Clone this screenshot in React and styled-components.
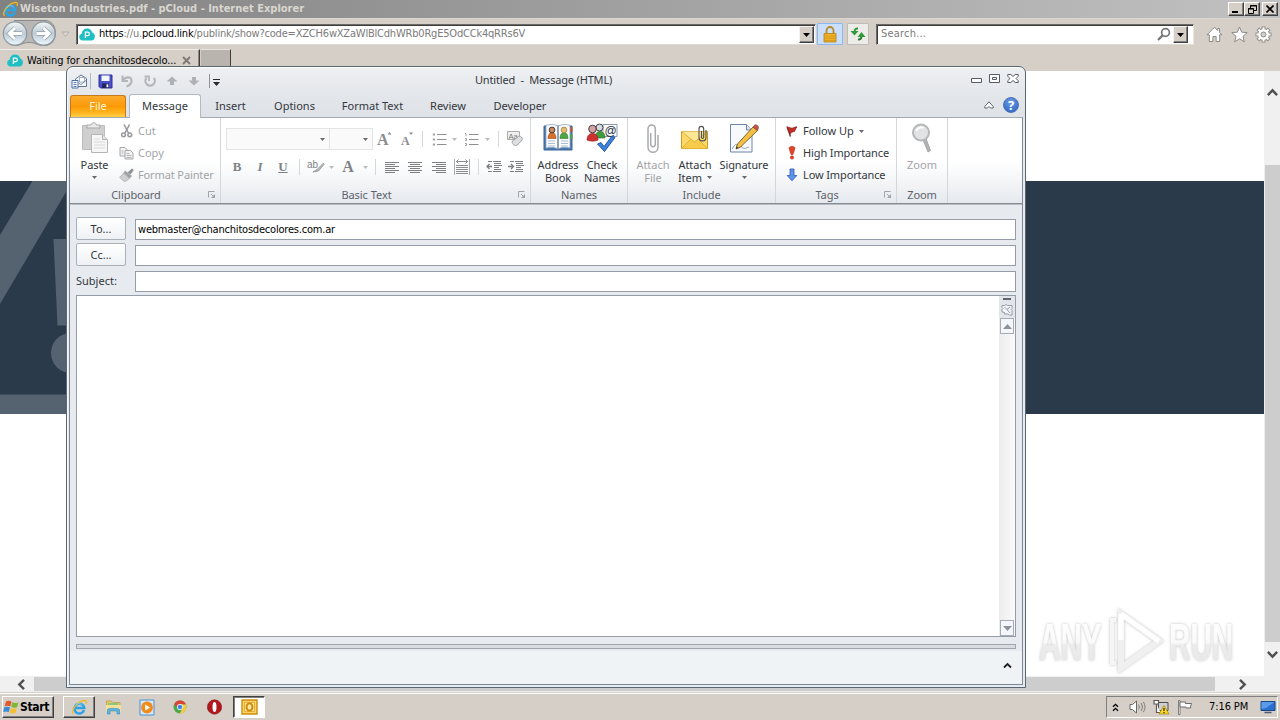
import React from 'react';
import styled, { createGlobalStyle, css } from 'styled-components';

const GlobalStyle = createGlobalStyle`
  * {
    box-sizing: border-box;
  }

  body {
    margin: 0;
    overflow: hidden;
    font-family: "DejaVu Sans Condensed", "DejaVu Sans", sans-serif;
    font-stretch: condensed;
    font-size: 11px;
    line-height: 14px;
    color: #000000;
  }

  svg {
    display: block;
    flex-shrink: 0;
  }
`;

const Screen = styled.div`
  position: relative;
  width: 1280px;
  height: 720px;
  display: flex;
  flex-direction: column;
  background: #d5cfc8;
  overflow: hidden;
  white-space: pre;
`;

const Text = styled.span`
  letter-spacing: ${props => props.$ls === undefined ? "inherit" : `${props.$ls}px`};
  color: ${props => props.$color || "inherit"};
`;

/* ---------- browser ---------- */

const TitleBar = styled.div`
  height: 18px;
  display: flex;
  align-items: center;
  padding: 0 2px 0 2px;
  background: linear-gradient(90deg, #818181, #c1c1c1);
  color: #d9d6d0;
  font-weight: bold;
`;

const TitleText = styled.span`
  flex: 1;
  padding-left: 2px;
  font-size: 11px;
`;

const CaptionButton = styled.span`
  width: 16px;
  height: 14px;
  margin-left: ${props => props.$gap || 0}px;
  display: flex;
  align-items: center;
  justify-content: center;
  background: #d5cfc8;
  border: 1px solid;
  border-color: #ffffff #404040 #404040 #ffffff;
  box-shadow: inset -1px -1px 0 #808080;
`;

const AddressRow = styled.div`
  height: 31px;
  display: flex;
  align-items: center;
  border-top: 1px solid #d8d8d0;
`;

const NavButtons = styled.div`
  width: 76px;
  display: flex;
  align-items: center;
`;

const AddressBox = styled.div`
  width: ${props => props.$w}px;
  height: 21px;
  margin-left: ${props => props.$gap || 0}px;
  display: flex;
  align-items: center;
  background: #ffffff;
  border: 1px solid;
  border-color: #6d6a66 #e9e5e0 #ddd8d2 #6d6a66;
  box-shadow: inset 1px 1px 0 #3e3e3e;
  padding: 0 1px 0 2px;
`;

const AddressText = styled.span`
  flex: 1;
  padding-left: ${props => props.$pad}px;
  letter-spacing: ${props => props.$ls}px;
  color: #7b7b7b;
`;

const DropButton = styled.span`
  width: 15px;
  height: 17px;
  margin: 1px ${props => props.$gap || 0}px 0 ${props => props.$before || 0}px;
  display: flex;
  align-items: center;
  justify-content: center;
  background: #d5cfc8;
  border: 1px solid;
  border-color: #f4f2ef #404040 #404040 #f4f2ef;
  box-shadow: inset -1px -1px 0 #808080;
`;

const SquareButton = styled.span`
  width: ${props => props.$w}px;
  height: 22px;
  margin-left: ${props => props.$gap}px;
  display: flex;
  align-items: center;
  justify-content: center;
  border: 1px solid ${props => props.$line};
  border-radius: 1px;
  background: ${props => props.$bg};
`;

const CommandIcons = styled.div`
  display: flex;
  gap: 7.5px;
  margin-left: 12px;
  padding-top: 1px;
`;

const TabRow = styled.div`
  height: 22px;
  display: flex;
  align-items: stretch;
`;

const BrowserTab = styled.div`
  width: 200px;
  display: flex;
  align-items: center;
  padding-left: 7px;
  border-top: 1px solid #f1eeea;
  border-right: 1px solid #3f3d3b;
  box-shadow: inset -1px 0 0 #8b8782;
`;

const TabLabel = styled.span`
  width: 155px;
  margin-left: 4px;
  letter-spacing: -0.1px;
`;

const NewTab = styled.div`
  width: 30px;
  margin: 0 0 0 1px;
  background: #bab4af;
  border-right: 1px solid #3f3d3b;
  border-top: 1px solid #e8e5e1;
`;

const Viewport = styled.div`
  flex: 1;
  display: flex;
  min-height: 0;
`;

const PageArea = styled.div`
  flex: 1;
  background: #ffffff;
  padding-top: 110px;
`;

const Banner = styled.div`
  height: 233px;
  background: #2a3a4b;
`;

const VScroll = styled.div`
  width: 16px;
  display: flex;
  flex-direction: column;
  align-items: center;
  justify-content: space-between;
  background: #f0f0f0;
  padding: 16px 0 16px;
`;

const VThumb = styled.div`
  align-self: stretch;
  margin: 67px 0 7px 1px;
  flex: 1;
  background: #cdcdcd;
`;

const HScroll = styled.div`
  height: 16px;
  display: flex;
  align-items: center;
  background: #f0f0f0;
  padding: 0 32px 0 16px;
`;

const HThumb = styled.div`
  flex: 1;
  height: 14px;
  margin: 0 22px 0 7px;
  background: #cdcdcd;
`;

/* ---------- taskbar ---------- */

const Taskbar = styled.div`
  height: 28px;
  display: flex;
  align-items: center;
  background: #d5cfc8;
  border-top: 1px solid #d5cfc8;
  box-shadow: inset 0 1px 0 #ffffff;
  padding: 1px 2px 0 2px;
`;

const StartButton = styled.div`
  width: 52px;
  height: 22px;
  display: flex;
  align-items: center;
  border: 1px solid;
  border-color: #ffffff #404040 #404040 #ffffff;
  box-shadow: inset -1px -1px 0 #808080;
  font-weight: bold;
  font-size: 12px;
`;

const TaskButton = styled.div`
  width: ${props => props.$w}px;
  height: 22px;
  display: flex;
  align-items: center;
  justify-content: center;
  border: 1px solid transparent;
  ${props => props.$raised && css`
    border-color: #ffffff #404040 #404040 #ffffff;
    box-shadow: inset -1px -1px 0 #808080;
  `}
  ${props => props.$pressed && css`
    margin-left: 2px;
    background: #ffffff;
    border-color: #404040 #ffffff #ffffff #404040;
    box-shadow: inset 1px 1px 0 #808080;
  `}
`;

const Tray = styled.div`
  width: 172px;
  height: 22px;
  margin-left: auto;
  display: flex;
  align-items: center;
  border: 1px solid;
  border-color: #808080 #ffffff #ffffff #808080;
  padding-left: 5px;
`;

const Clock = styled.span`
  width: 51px;
  margin-left: 6px;
  letter-spacing: -0.1px;
`;

/* ---------- message window ---------- */

const Window = styled.div`
  position: absolute;
  left: 66px;
  top: 66px;
  width: 960px;
  height: 622px;
  display: flex;
  flex-direction: column;
  border: 1px solid #596673;
  border-radius: 7px 7px 0 0;
  padding: 0 2px 2px;
  box-shadow: inset 0 1px 0 #ffffff, inset 1px 0 0 #f6f8fa;
  background: linear-gradient(180deg, #eef0f3 0, #e1e4e8 36px, #dfe3e8 50px, #e7ebf0 51px);
  color: #33373d;
  font-family: "Noto Sans", "DejaVu Sans", sans-serif;
  font-stretch: normal;
`;

const WindowTitle = styled.div`
  height: 28px;
  display: flex;
  align-items: center;
  padding: 0 4px 0 2px;
`;

const Caption = styled.span`
  padding-bottom: 2px;
  letter-spacing: -0.17px;
`;

const QuickBar = styled.div`
  width: 404px;
  display: flex;
  align-items: center;
`;

const QuickSlot = styled.span`
  width: ${props => props.$w}px;
  display: flex;
  justify-content: center;
`;

const WindowButtons = styled.div`
  margin-left: auto;
  padding-bottom: 4px;
  display: flex;
  align-items: center;
  gap: 7px;
`;

const Tabs = styled.div`
  height: 22px;
  display: flex;
`;

const Tab = styled.div`
  width: ${props => props.$w}px;
  display: flex;
  align-items: center;
  justify-content: center;
  ${props => props.$file && css`
    margin-left: 1px;
    margin-right: 3px;
    padding-bottom: 2px;
    color: #fff3d6;
    border: 1px solid #c77a1a;
    border-bottom: none;
    border-radius: 3px 3px 0 0;
    background: linear-gradient(180deg, #fdab2c 0%, #fb9a06 50%, #ffb520 80%, #ffd04a 100%);
  `}
  ${props => props.$active && css`
    height: 24px;
    margin-top: -1px;
    padding-bottom: 2px;
    position: relative;
    background: #ffffff;
    border: 1px solid #b4b9c1;
    border-bottom: none;
    border-radius: 3px 3px 0 0;
  `}
`;

const TabTools = styled.div`
  margin-left: auto;
  display: flex;
  align-items: center;
  gap: 9px;
  padding: 0 4px 2px 0;
`;

const HelpBadge = styled.span`
  width: 16px;
  height: 16px;
  border-radius: 50%;
  display: flex;
  align-items: center;
  justify-content: center;
  background: radial-gradient(circle at 50% 30%, #6d9fe8, #2a5dba);
  border: 1px solid #4c72b4;
  color: #ffffff;
  font-size: 13px;
  font-weight: bold;
`;

const Frame = styled.div`
  flex: 1;
  display: flex;
  flex-direction: column;
  border: 1px solid #7d8894;
  border-top-color: #a3a9b1;
  background: #e7ebf0;
`;

const Ribbon = styled.div`
  height: 86px;
  display: flex;
  background: linear-gradient(180deg, #ffffff 0%, #ffffff 50%, #f4f5f7 75%, #e5e9ee 100%);
  border-bottom: 1px solid #868c94;
  box-shadow: 0 1px 0 #b9bec5;
`;

const Group = styled.div`
  width: ${props => props.$w}px;
  display: flex;
  flex-direction: column;
  border-right: 1px solid #d3d6da;
  padding-top: 3px;
`;

const GroupBody = styled.div`
  height: 66px;
  display: flex;
  flex-direction: ${props => props.$column ? "column" : "row"};
  padding-left: ${props => props.$pad || 0}px;
`;

const GroupFooter = styled.div`
  height: 16px;
  display: flex;
  align-items: center;
  color: #5d6268;
`;

const GroupName = styled.span`
  flex: 1;
  text-align: center;
  letter-spacing: -0.05px;
`;

const Launcher = styled.span`
  width: 12px;
  margin-left: 6px;
`;

const BigButton = styled.div`
  width: ${props => props.$w}px;
  display: flex;
  flex-direction: column;
  align-items: center;
  line-height: 13px;
  text-align: center;
  color: ${props => props.$off ? "#a3a5a8" : "#33373d"};
  letter-spacing: ${props => props.$ls || 0}px;
`;

const BigIcon = styled.span`
  height: 34px;
  display: flex;
  align-items: center;
`;

const BigLabel = styled.span`
  margin-top: 3px;
`;

const LineTwo = styled.span`
  height: 13px;
  display: flex;
  align-items: center;
  justify-content: center;
  gap: 5px;
`;

const SmallStack = styled.div`
  display: flex;
  flex-direction: column;
  padding-left: ${props => props.$pad || 0}px;
`;

const SmallButton = styled.div`
  height: 22px;
  display: flex;
  align-items: center;
  color: ${props => props.$off ? "#a3a5a8" : "#33373d"};
  letter-spacing: ${props => props.$ls || 0}px;
  padding-bottom: 2px;
  gap: ${props => props.$gap || 4}px;
`;

const ToolRow = styled.div`
  height: 22px;
  display: flex;
  align-items: center;
  margin: ${props => props.$top}px 0 0 5px;
`;

const Combo = styled.span`
  width: ${props => props.$w}px;
  height: 22px;
  display: flex;
  align-items: center;
  justify-content: flex-end;
  padding-right: 4px;
  border: 1px solid #e3e4e6;
  background: #fafafa;
  ${props => props.$joined && css`
    border-left: none;
  `}
`;

const Cell = styled.span`
  width: ${props => props.$w}px;
  display: flex;
  align-items: center;
  justify-content: center;
`;

const Rule = styled.span`
  width: 1px;
  height: 16px;
  background: ${props => props.$dark ? "#b5b9be" : "#d5d7da"};
`;

const Letter = styled.span`
  font-family: "Liberation Serif", serif;
  font-weight: bold;
  font-size: ${props => props.$size || 13}px;
  font-style: ${props => props.$italic ? "italic" : "normal"};
  text-decoration: ${props => props.$under ? "underline" : "none"};
  color: #7f8285;
`;

const Fields = styled.div`
  padding: 13px 6px 0 6px;
  display: flex;
  flex-direction: column;
  gap: 3px;
`;

const Field = styled.div`
  height: 23px;
  display: flex;
  align-items: center;
`;

const FieldButton = styled.span`
  width: 50px;
  height: 23px;
  display: flex;
  align-items: center;
  justify-content: center;
  border: 1px solid #a9b0b9;
  border-radius: 2px;
  background: linear-gradient(180deg, #ffffff, #eef1f4);
`;

const FieldLabel = styled.span`
  width: 50px;
`;

const Input = styled.div`
  flex: 1;
  height: 21px;
  margin: 2px 0 0 9px;
  display: flex;
  align-items: center;
  padding-left: 2px;
  border: 1px solid #949da7;
  background: #ffffff;
  color: #000000;
  font-family: "DejaVu Sans Condensed", "DejaVu Sans", sans-serif;
  font-stretch: condensed;
  letter-spacing: -0.2px;
`;

const Editor = styled.div`
  height: 342px;
  margin: 3px 6px 0;
  display: flex;
  justify-content: flex-end;
  border: 1px solid #949da7;
  background: #ffffff;
`;

const EditorScroll = styled.div`
  width: 16px;
  display: flex;
  flex-direction: column;
  align-items: center;
  background: linear-gradient(90deg, #ececec, #fafafa);
`;

const ScrollTools = styled.div`
  width: 16px;
  height: 22px;
  display: flex;
  flex-direction: column;
  align-items: center;
  background: #e2e5e9;
  padding-top: 2px;
  gap: 4px;
`;

const ScrollArrow = styled.div`
  width: 14px;
  height: 16px;
  display: flex;
  align-items: center;
  justify-content: center;
  margin-top: ${props => props.$end ? "auto" : 0};
  border: 1px solid #a5abb8;
  background: #f4f6f9;
`;

const Splitter = styled.div`
  height: 5px;
  margin: 7px 6px 0;
  border: 1px solid #a0a6ae;
  background: #d8dbe0;
`;

const PeoplePane = styled.div`
  flex: 1;
  margin-top: 2px;
  display: flex;
  justify-content: flex-end;
  background: #eff3f6;
  padding: 11px 10px 0 0;
`;

const Watermark = styled.div`
  position: absolute;
  left: 1030px;
  top: 602px;
`;

/* ---------- icons ---------- */

const Caret = ({ color = "#66696d", size = 5 }) => (
    <svg width={size} height={size > 5 ? 4 : 3} viewBox="0 0 5 3" preserveAspectRatio="none"><path d="M0 0h5L2.5 3z" fill={color}/></svg>
);

const Chevron = ({ dir, color = "#505050" }) => {
    const turn = { up: 0, right: 90, down: 180, left: 270 }[dir];
    return (
        <svg width="11" height="11" viewBox="0 0 10 10">
            <path d="M.8 7.300L5 3l4.200 4.300" transform={`rotate(${turn} 5 5)`} fill="none" stroke={color} strokeWidth="2.2"/>
        </svg>
    );
};

const IeIcon = ({ size = 16 }) => (
    <svg width={size} height={size} viewBox="0 0 16 16">
        <path d="M13 11.200A4.900 4.900 0 1 1 13.200 8.900H4.500" fill="none" stroke="#2aa3e8" strokeWidth="2.500"/>
        <path d="M2.500 14.800C-1 12 7 1.700 14 1.400c1.800.1 1.600 2 .8 3.600" fill="none" stroke="#f2b91c" strokeWidth="1.300"/>
        <path d="M4.200 6.600C5.500 4.500 9.600 4 11.500 6" fill="none" stroke="#8fd6ff" strokeWidth=".8"/>
    </svg>
);

const CloudIcon = () => (
    <svg width="16" height="13" viewBox="0 0 16 13">
        <path d="M4 12.500C1.600 12.500.2 11 .2 9c0-1.700 1-3 2.500-3.300C3 2.500 5 .5 8 .5c2.600 0 4.600 1.500 5.200 4 1.700.5 2.700 2 2.700 3.900 0 2.300-1.500 4.100-3.700 4.100z" fill="#1fbfc4"/>
        <path d="M6.400 10V4.200h2.200a1.700 1.700 0 0 1 0 3.500H6.400" fill="none" stroke="#fff" strokeWidth="1.200"/>
    </svg>
);

const NavArrows = () => (
    <svg width="76" height="30" viewBox="0 0 76 30">
        <defs>
            <linearGradient id="glass" x1="0" y1="0" x2="0" y2="1">
                <stop offset="0" stopColor="#f4f7f9"/>
                <stop offset=".5" stopColor="#bccad4"/>
                <stop offset="1" stopColor="#eefaff"/>
            </linearGradient>
        </defs>
        <path d="M14 1.500h31c14 0 14 25 0 25-9 0-9-3-16-3s-7 3-15 3" fill="#b9b7b4" stroke="#8c8c8c"/>
        <circle cx="15" cy="14.500" r="11.700" fill="url(#glass)" stroke="#8e989e" strokeWidth="1.200"/>
        <circle cx="43.500" cy="14.500" r="11.700" fill="url(#glass)" stroke="#8e989e" strokeWidth="1.200"/>
        <path d="M22 14.500H9m6-5.500L9.300 14.500l5.700 5.500" fill="none" stroke="#93a0a8" strokeWidth="4.400"/>
        <path d="M22 14.500H9m6-5.500L9.300 14.500l5.700 5.500" fill="none" stroke="#fff" strokeWidth="3"/>
        <path d="M36.500 14.500h13m-6-5.500l5.700 5.500-5.700 5.500" fill="none" stroke="#93a0a8" strokeWidth="4.400"/>
        <path d="M36.500 14.500h13m-6-5.500l5.700 5.500-5.700 5.500" fill="none" stroke="#fff" strokeWidth="3"/>
        <path d="M62 13h7l-3.500 4.500z" fill="#ddd8d2" stroke="#aaa49e" strokeWidth=".8"/>
    </svg>
);

const LockIcon = () => (
    <svg width="14" height="17" viewBox="0 0 14 17">
        <path d="M3.500 8V4.500a3.500 3.500 0 0 1 7 0V8" fill="none" stroke="#b8892b" strokeWidth="1.800"/>
        <path d="M1 7.500h12V16H1z" fill="#f0b428" stroke="#b87f10" strokeWidth=".8"/>
        <path d="M1.500 10h11M1.500 12.200h11M1.500 14.400h11" stroke="#c98d17" strokeWidth=".7"/>
    </svg>
);

const RefreshIcon = () => (
    <svg width="16" height="14" viewBox="0 0 16 14">
        <path d="M8 1.500C5.500 1.200 4.500 2.800 4.500 5" fill="none" stroke="#2f9a3a" strokeWidth="2"/>
        <path d="M.5 4h8L4.500 8.500z" fill="#2f9a3a"/>
        <path d="M8 12.500c2.500.3 3.500-1.200 3.500-3.500" fill="none" stroke="#2f7a38" strokeWidth="2"/>
        <path d="M7.500 10h8L11.500 5z" fill="#2f9a3a"/>
    </svg>
);

const SearchIcon = () => (
    <svg width="14" height="14" viewBox="0 0 14 14">
        <circle cx="8.500" cy="5.500" r="3.900" fill="none" stroke="#777" strokeWidth="1.700"/>
        <path d="M5.600 8.400L1 13" stroke="#777" strokeWidth="2.200"/>
    </svg>
);

const HomeIcon = () => (
    <svg width="17" height="17" viewBox="0 0 17 17">
        <path d="M8.500 1.200L1 8.800h2.300V15.500h3.600V10.500h3.200v5h3.600V8.800H16l-2.500-2.500V2.500h-1.800v2z" fill="#fff" stroke="#8d8a87"/>
    </svg>
);

const StarIcon = () => (
    <svg width="17" height="17" viewBox="0 0 17 17">
        <path d="M8.500 1l2.200 5.200 5.500.4-4.200 3.700 1.300 5.500-4.800-3-4.800 3L5 10.300.8 6.600l5.500-.4z" fill="#fff" stroke="#8d8a87"/>
    </svg>
);

const GearIcon = () => (
    <svg width="17" height="17" viewBox="0 0 17 17">
        {[0, 45, 90, 135].map(a => (
            <path key={a} d="M8.500.5v16" transform={`rotate(${a} 8.500 8.500)`} stroke="#8d8a87" strokeWidth="3.800"/>
        ))}
        <circle cx="8.500" cy="8.500" r="6.300" fill="#8d8a87"/>
        {[0, 45, 90, 135].map(a => (
            <path key={a} d="M8.500 1.400v14.200" transform={`rotate(${a} 8.500 8.500)`} stroke="#fff" strokeWidth="2"/>
        ))}
        <circle cx="8.500" cy="8.500" r="5.400" fill="#fff"/>
        <circle cx="8.500" cy="8.500" r="2.500" fill="#d5cfc8" stroke="#8d8a87"/>
    </svg>
);

const BannerArt = () => (
    <svg width="66" height="233" viewBox="0 0 66 233" fill="#556371">
        <path d="M32.500 0H66v11L0 123V54z"/>
        <path d="M53.500 58H66v86.500H57.500z"/>
        <circle cx="71" cy="172" r="20"/>
        <path d="M0 213.500h66V233H0z"/>
    </svg>
);

const MailIcon = () => (
    <svg width="17" height="15" viewBox="0 0 17 15">
        <path d="M4.500 5L10 1l5.500 3.500v8h-11z" fill="#f4f7fb" stroke="#5e7693"/>
        <path d="M8.500 3.500h5V8h-5z" fill="#fff" stroke="#7d8fa6" strokeWidth=".7"/>
        <path d="M7.500 9l2.500 1.500L15.500 6" fill="none" stroke="#5e7693" strokeWidth=".8"/>
        <path d="M1 6.500h6v7.500H1z" fill="#fff" stroke="#4c6ea5"/>
        <path d="M2.500 8.500h3m-3 2h3m-3 2h3" stroke="#4c6ea5" strokeWidth=".9"/>
    </svg>
);

const SaveIcon = () => (
    <svg width="15" height="15" viewBox="0 0 15 15">
        <path d="M1 1h13v13H2.500L1 12.500z" fill="#4950c9" stroke="#2e3294"/>
        <path d="M3.500 1.500h8v5.500h-8z" fill="#f4f6fd"/>
        <path d="M4 9.500h7v4.500H4z" fill="#20255f"/>
        <path d="M8.500 10.300h1.800v3H8.500z" fill="#fff"/>
    </svg>
);

const UndoIcon = () => (
    <svg width="14" height="14" viewBox="0 0 14 14">
        <path d="M2.500 1.500v5.500H8" fill="none" stroke="#b3b6ba" strokeWidth="2"/>
        <path d="M3 6.500C5 2.500 11.500 2 11.500 6.500c0 2.800-2 5-5 6" fill="none" stroke="#b3b6ba" strokeWidth="2.200"/>
    </svg>
);

const RedoIcon = () => (
    <svg width="14" height="14" viewBox="0 0 14 14">
        <path d="M3.500 4a4.700 4.700 0 1 0 7.300 0" fill="none" stroke="#b3b6ba" strokeWidth="2.200"/>
        <path d="M1.500 2.500H6V7" fill="none" stroke="#b3b6ba" strokeWidth="1.800"/>
    </svg>
);

const BlockArrow = ({ down }) => (
    <svg width="12" height="10" viewBox="0 0 12 10">
        <path d="M6 .5l5.500 5H8V9H4V5.500H.5z" fill="#aeb1b5" transform={down ? "rotate(180 6 5)" : undefined}/>
    </svg>
);

const CustomizeIcon = () => (
    <svg width="12" height="14" viewBox="0 0 12 14">
        <path d="M1.500 0v14" stroke="#8d9299" strokeWidth="1"/>
        <path d="M5 5.500h7" stroke="#26282b"/>
        <path d="M5 8h7L8.500 12z" fill="#26282b"/>
    </svg>
);

const MinIcon = () => (
    <svg width="11" height="12" viewBox="0 0 11 12"><path d="M.5 5.500h10v4H.500z" fill="#fff" stroke="#565c66"/></svg>
);

const MaxIcon = () => (
    <svg width="11" height="12" viewBox="0 0 11 12">
        <path d="M.5 1.500h10v8H.500z" fill="#fff" stroke="#565c66"/>
        <path d="M3.500 4.500h4v2h-4z" fill="#fff" stroke="#565c66"/>
    </svg>
);

const CloseIcon = () => (
    <svg width="12" height="12" viewBox="0 0 12 12">
        <path d="M.8 1.500h3l2.200 2 2.200-2h3v1.800L9 5.500l2.200 2.200v1.800h-3L6 7.500l-2.200 2h-3V7.700L3 5.500.8 3.300z" fill="#fff" stroke="#565c66"/>
    </svg>
);

const CollapseIcon = () => (
    <svg width="10" height="8" viewBox="0 0 10 8">
        <path d="M.8 5.500L5 .8l4.200 4.700v1.500H6.500L5 5.500 3.500 7H.8z" fill="#fff" stroke="#5f6570"/>
    </svg>
);

const PasteIcon = () => (
    <svg width="28" height="32" viewBox="0 0 28 32">
        <path d="M1.500 3.500h22v24h-22z" fill="#cfcfcf" stroke="#bdbdbd"/>
        <path d="M6 6V3h4c.5-3 5-3 5.500 0H19v3z" fill="#e9e9e9" stroke="#a7a7a7"/>
        <path d="M10.500 12.500h11l5 5v13h-16z" fill="#f6f6f6" stroke="#b5b5b5"/>
        <path d="M21.500 12.500v5h5" fill="#e2e2e2" stroke="#b5b5b5"/>
        <path d="M13 17h6m-6 3h11m-11 3h11m-11 3h11" stroke="#dadada"/>
    </svg>
);

const CutIcon = () => (
    <svg width="15" height="14" viewBox="0 0 15 14" fill="none" stroke="#97999c">
        <path d="M5 .5l4.500 8.500M10.500.5L6 9" strokeWidth="1.600"/>
        <circle cx="4.500" cy="10.800" r="1.900" strokeWidth="1.500"/>
        <circle cx="10.800" cy="10.800" r="1.900" strokeWidth="1.500"/>
    </svg>
);

const CopyIcon = () => (
    <svg width="15" height="14" viewBox="0 0 15 14" stroke="#a5a7aa">
        <path d="M1 1.500h5l2 2V10H1z" fill="#f2f2f2"/>
        <path d="M6 4.500h5.500l2.500 2.500v6H6z" fill="#f2f2f2"/>
        <path d="M2.500 5h2m-2 2h2m3 .5h3m-3 2h5m-5 2h5" strokeWidth=".8"/>
    </svg>
);

const PainterIcon = () => (
    <svg width="15" height="14" viewBox="0 0 15 14">
        <path d="M13 .5l1.800 1.500L11.500 6.500 8.500 4.500z" fill="#8f9194"/>
        <path d="M6 2.500l7 5.500-2.500 2.500L4.500 5z" fill="#a0a2a5"/>
        <path d="M4.500 5l6 5.500c-1.500 1.500-3.500 2.800-5.500 3L.5 9C2 8.200 3.500 6.800 4.500 5z" fill="#cfd0d1" stroke="#a5a7a9" strokeWidth=".7"/>
    </svg>
);

const LauncherIcon = () => (
    <svg width="8" height="8" viewBox="0 0 8 8" fill="none" stroke="#a0a4a9">
        <path d="M.5 6.500v-6h6"/>
        <path d="M3 3l3 3"/>
        <path d="M7 3v4H3z" fill="#a0a4a9" stroke="none"/>
    </svg>
);

const ListIcon = ({ numbered }) => (
    <svg width="15" height="13" viewBox="0 0 15 13">
        <path d="M5 1.500h9.500m-9.500 5h9.500m-9.500 5h9.500" stroke="#8d8f92"/>
        {numbered
            ? <path d="M1 .5h1v2.500M1 5.500h1.500v2H1M1 10.500h1.500v2H1" stroke="#9c9ea1" fill="none"/>
            : <path d="M.8.5h2.200v2H.8zm0 5h2.200v2H.8zm0 5h2.200v2H.8z" fill="#a2a4a7"/>}
    </svg>
);

const AlignIcon = ({ mode }) => {
    const lines = [14, 10, 14, 10, 14, 10];
    return (
        <svg width="15" height="13" viewBox="0 0 15 13">
            {lines.map((w, i) => {
                const x = mode === "left" ? 0 : mode === "right" ? 14 - w : (14 - w) / 2;
                return <path key={i} d={`M${x} ${i * 2 + 1.5}h${w}`} stroke="#7d7f82"/>;
            })}
        </svg>
    );
};

const JustifyIcon = () => (
    <svg width="16" height="16" viewBox="0 0 16 16" stroke="#8a8c8f" fill="none">
        <path d="M.5 0v16M15.500 0v16" stroke="#a9abae"/>
        <path d="M2 2.500h12M4.500.5l-2 2 2 2m7-4l2 2-2 2"/>
        <path d="M2 6.500h12m-12 2h12m-12 2h12m-12 2h12m-12 2h12"/>
    </svg>
);

const IndentIcon = ({ more }) => (
    <svg width="16" height="14" viewBox="0 0 16 14" stroke="#7d7f82" fill="none">
        <path d="M2 1.500h4m1 0h8M8 3.500h7M8 5.500h8M8 7.500h5M8 9.500h7M2 11.500h4m1 0h8"/>
        <path d={more ? "M0 6.500h5M3 4l2.500 2.500L3 9" : "M1 6.500h5M3.500 4L1 6.500 3.500 9"} strokeWidth="1.300"/>
    </svg>
);

const FormatClearIcon = () => (
    <svg width="18" height="18" viewBox="0 0 18 18">
        <path d="M1.500 1.500h12v8h-12z" fill="#efefef" stroke="#a9abad"/>
        <text x="2.500" y="8.500" fontSize="7.500" fontFamily="Liberation Sans" fill="#77797c">Aa</text>
        <path d="M6 11.500l6.500-5c2-1 4.500 1 3.500 3.500L11.500 15c-2.500 1.500-5.500-.5-5.500-3.500z" fill="#dedede" stroke="#a0a2a5"/>
    </svg>
);

const HighlightIcon = () => (
    <svg width="18" height="15" viewBox="0 0 18 15">
        <text x="0" y="8" fontSize="10" fontFamily="Liberation Sans" fill="#808285">ab</text>
        <path d="M16.500 3L10 9.500l-4 2.500 5.500-1L17 4.500z" fill="#b5b7b9" stroke="#929497" strokeWidth=".8"/>
    </svg>
);

const ResizeLetter = ({ grow }) => (
    <svg width="16" height="16" viewBox="0 0 16 16">
        <text x={grow ? 0 : 2} y="14" fontSize={grow ? 16 : 12} fontWeight="bold" fontFamily="Liberation Serif" fill="#8b8d90">A</text>
        <path d={grow ? "M10.500 3.500h4L12.500 1z" : "M10 1.500h4L12 4z"} fill="#8b8d90"/>
    </svg>
);

const AddressBookIcon = () => (
    <svg width="31" height="30" viewBox="0 0 31 30">
        <path d="M1 3h28v24H1z" fill="#4a79ad" stroke="#3a6698"/>
        <path d="M3 2.500c4-1.500 9-1.500 12 1 3-2.500 8-2.500 12-1V25c-4-1-9-1-12 1-3-2-8-2-12-1z" fill="#fdfdfe" stroke="#8aa3bf" strokeWidth=".8"/>
        <path d="M15 3.500V26" stroke="#6985a6" strokeWidth="1.500"/>
        <path d="M5 18h7m-7 2.500h7M5 23h7m6-5h7m-7 2.500h7M18 23h7" stroke="#a9bdd3"/>
        <path d="M5 15.500c0-8 8-8 8 0z" fill="#d8702c" stroke="#97451a" strokeWidth=".6"/>
        <circle cx="9" cy="7" r="2.900" fill="#c98b5d" stroke="#3a332e" strokeWidth=".9"/>
        <path d="M17 15.500c0-8 8-8 8 0z" fill="#4ba544" stroke="#2f7a2b" strokeWidth=".6"/>
        <circle cx="21" cy="7" r="2.900" fill="#e3bb78" stroke="#a5813d" strokeWidth=".8"/>
        <path d="M28.500 4v5" stroke="#d2502b" strokeWidth="2"/>
        <path d="M28.500 11v5" stroke="#4ba544" strokeWidth="2"/>
    </svg>
);

const CheckNamesIcon = () => (
    <svg width="32" height="30" viewBox="0 0 32 30">
        <path d="M17 1.500h14v12H17z" fill="#fafbfd" stroke="#8e9aad"/>
        <path d="M9 15c0-9 10-9 10 0z" fill="#3f9b3b" stroke="#276f25" strokeWidth=".6"/>
        <circle cx="13.500" cy="4.500" r="3.500" fill="#d9dde0" stroke="#3f4347"/>
        <path d="M1 17c0-9 11-9 11 0-2 1.500-9 1.500-11 0z" fill="#cf3030" stroke="#951d1d" strokeWidth=".6"/>
        <circle cx="6.500" cy="6" r="3.800" fill="#d3a2a2" stroke="#4d3a3c"/>
        <text x="18.500" y="12" fontSize="12" fontFamily="Liberation Sans" fill="#2c3242">@</text>
        <path d="M11.500 21l3.500-1.500 3 4L26 13l3 1.500L18.500 28.500z" fill="#3d83dc" stroke="#1d4f9e" strokeWidth=".9"/>
    </svg>
);

const ClipIcon = () => (
    <svg width="12" height="31" viewBox="0 0 12 31" fill="none" stroke="#a9abae" strokeWidth="1.500">
        <path d="M3.700 10v11c0 3.500 4.600 3.500 4.600 0V6c0-5.500-7.300-5.500-7.300 0v18c0 7 10 7 10 0V12"/>
    </svg>
);

const EnvelopeClipIcon = () => (
    <svg width="30" height="30" viewBox="0 0 30 30">
        <path d="M1.500 8.500h26v17h-26z" fill="#fbd968" stroke="#cf9a26"/>
        <path d="M1.500 25.500l9-9h8l9 9" fill="#f8cc4b" stroke="#d9a735" strokeWidth=".8"/>
        <path d="M1.500 8.500l13 10.500 13-10.500" fill="#fde694" stroke="#d9a735" strokeWidth=".9"/>
        <path d="M21.500 8v6c0 2 2.200 2 2.200 0V6c0-3.500-4.700-3.500-4.700 0v8.500c0 4.500 7 4.500 7 0V7" fill="none" stroke="#4b4f56" strokeWidth="1.100"/>
    </svg>
);

const SignatureIcon = () => (
    <svg width="30" height="31" viewBox="0 0 30 31">
        <path d="M1.500 1.500h16l5.500 5.500v22H1.500z" fill="#f7f9fd" stroke="#6b84a8"/>
        <path d="M17.500 1.500V7H23" fill="#dbe4f0" stroke="#6b84a8"/>
        <path d="M3 26c3-5 5-6 5-3s1 3 4 0c2 4 5 2 8 1" fill="none" stroke="#8793a5" strokeWidth=".9"/>
        <path d="M24 4l4.500 3.500-17 16.500-4.500 2 1.500-5z" fill="#f4bf45" stroke="#755a22" strokeWidth=".9"/>
        <path d="M24 4l1.700-2c1.500-1 4.500 1.500 3.800 3l-1 2.500z" fill="#c9534b" stroke="#7b4430" strokeWidth=".6"/>
        <path d="M7 26l2-1.300-1.300-1.200z" fill="#22252b"/>
    </svg>
);

const FlagIcon = () => (
    <svg width="12" height="13" viewBox="0 0 12 13">
        <path d="M1 1.500l3.500 10" stroke="#7d3530" strokeWidth="1.500"/>
        <path d="M1.500 2.500c2-1 3 1 5 .5s3-1.500 4.500-1c-1.500 1.500-1.500 3-2.500 4.500-2 .5-3 .8-4.500 2.500z" fill="#c22f27" stroke="#8c1d18" strokeWidth=".6"/>
    </svg>
);

const AlertIcon = () => (
    <svg width="12" height="14" viewBox="0 0 12 14">
        <path d="M3 2c.5-2 5.500-2 6 0L7 8.500H5z" fill="#e5432a" stroke="#b42c17" strokeWidth=".6"/>
        <circle cx="6" cy="11.500" r="1.700" fill="#e5432a" stroke="#b42c17" strokeWidth=".5"/>
    </svg>
);

const DownIcon = () => (
    <svg width="12" height="14" viewBox="0 0 12 14">
        <path d="M4 1h4v6.500h2.800L6 12.800 1.200 7.500H4z" fill="#5f92ea" stroke="#2d57a8" strokeWidth=".8"/>
    </svg>
);

const ZoomIcon = () => (
    <svg width="22" height="31" viewBox="0 0 22 31">
        <path d="M12 17l3-1.500 4.500 12L17 29z" fill="#b1b3b5" stroke="#939598" strokeWidth=".7"/>
        <circle cx="10" cy="9.500" r="8" fill="#e2e3e4" stroke="#b4b6b8" strokeWidth="2"/>
        <path d="M5.500 8c.5-3 4-4.500 7-3" fill="none" stroke="#fff" strokeWidth="1.800"/>
    </svg>
);

const SelectObjectIcon = () => (
    <svg width="12" height="12" viewBox="0 0 12 12" fill="#f1f3f5" stroke="#8c929c" strokeWidth=".9">
        <path d="M1 1.500h2.500l1.500-1 1.500 1H11v3l-1 1 1 1V11H8.500L7 10H3.500V8.500L1 8V5.500l1-1-1-1z"/>
        <path d="M3.500 3L6 5.500 9 3M6 5.500L9 9" fill="none"/>
    </svg>
);

const WindowsFlag = () => (
    <svg width="17" height="16" viewBox="0 0 17 16">
        <path d="M3 2.500c2-1 4-.8 5.500.3L7.300 7.500C5.800 6.500 3.700 6.400 1.700 7.200z" fill="#e4572b"/>
        <path d="M9.300 3.200c2 1 4 1 6.200.2l-1.300 4.700c-2 .8-4 .7-6-.3z" fill="#7db83a"/>
        <path d="M1.400 8.200c2-.8 4-.7 5.600.3l-1.300 4.700C4.200 12.200 2 12.100.1 13z" fill="#3a8ad8"/>
        <path d="M7.900 8.900c2 1 4 1 6 .2l-1.300 4.700c-2 .9-4 .7-6-.3z" fill="#f6c02c"/>
    </svg>
);

const FolderIcon = () => (
    <svg width="17" height="16" viewBox="0 0 17 16">
        <path d="M1.500 2h5l1.500 1.500h7v8h-13.500z" fill="#e8c765" stroke="#b99a45" strokeWidth=".7"/>
        <path d="M3 4h10v4H3z" fill="#8ec77c"/>
        <path d="M1 6h15v7H1z" fill="#f5e09a"/>
        <path d="M2.500 15v-4.500c0-1.500 12-1.500 12 0V15H12v-3H5v3z" fill="#5fb4e6" stroke="#3b8cc4" strokeWidth=".7"/>
    </svg>
);

const PlayerIcon = () => (
    <svg width="16" height="17" viewBox="0 0 16 17">
        <path d="M1 1h14v15H1z" fill="#d6e8f8" stroke="#4b92cf"/>
        <circle cx="8" cy="8.500" r="5.900" fill="#f38b1c"/>
        <path d="M6.200 5.500v6l4.800-3z" fill="#fff"/>
    </svg>
);

const ChromeIcon = () => (
    <svg width="14" height="14" viewBox="0 0 14 14">
        <circle cx="7" cy="7" r="6.500" fill="#4ca64c"/>
        <path d="M1.300 4A6.500 6.500 0 0 1 13 4.500H7L4.500 8z" fill="#dc4437"/>
        <path d="M13 4.500A6.500 6.500 0 0 1 6.500 13.500L10 8 7 4.500z" fill="#f7cb3f"/>
        <circle cx="7" cy="7" r="3" fill="#fff"/>
        <circle cx="7" cy="7" r="2.300" fill="#4285e8"/>
    </svg>
);

const OperaIcon = () => (
    <svg width="15" height="16" viewBox="0 0 15 16">
        <circle cx="7.500" cy="8" r="7.200" fill="#b3161b" stroke="#7c0d10" strokeWidth=".5"/>
        <ellipse cx="7.500" cy="8" rx="2" ry="5" fill="#fff"/>
    </svg>
);

const OutlookIcon = () => (
    <svg width="17" height="16" viewBox="0 0 17 16">
        <path d="M1 1h15v14H1z" fill="#fbd35c" stroke="#d08d12" strokeWidth="1.400"/>
        <path d="M3.500 3.500h10v9h-10z" fill="#fde9a4" stroke="#e0a52c" strokeWidth=".8"/>
        <ellipse cx="8.500" cy="8" rx="3" ry="3.600" fill="none" stroke="#d18806" strokeWidth="1.900"/>
    </svg>
);

const TrayUpIcon = () => (
    <svg width="7" height="9" viewBox="0 0 7 9" fill="none" stroke="#000" strokeWidth="1.300">
        <path d="M1 3.800l2.500-2.500L6 3.800M1 7.800l2.500-2.500L6 7.800"/>
    </svg>
);

const SpeakerIcon = () => (
    <svg width="17" height="14" viewBox="0 0 17 14">
        <path d="M1 4.500h2.500l4-3.500v12l-4-3.500H1z" fill="#fff" stroke="#676767"/>
        <path d="M9.500 4.500c1 1.500 1 3.500 0 5M12 3c1.800 2.500 1.800 5.500 0 8M14.300 1.800c2.200 3.500 2.200 7 0 10.400" fill="none" stroke="#7a7a7a"/>
    </svg>
);

const NetworkIcon = () => (
    <svg width="17" height="16" viewBox="0 0 17 16">
        <path d="M5.500 3.500h9.500v8H5.500z" fill="#cfcfcf" stroke="#4c4c4c"/>
        <path d="M1 1.500h4.500V5H1zM3.500 5v8.500h4" fill="#fff" stroke="#5a5a5a" strokeWidth="1.200"/>
        <path d="M11 6.500l5 8.500H6z" fill="#ffd91f" stroke="#9f8209" strokeWidth=".7"/>
        <path d="M11 9v3m0 1v1.200" stroke="#222" strokeWidth="1.200"/>
    </svg>
);

const TrayFlagIcon = () => (
    <svg width="16" height="15" viewBox="0 0 16 15">
        <path d="M1.500.5h1.500V14.500H1.500z" fill="#fff" stroke="#666" strokeWidth=".8"/>
        <path d="M3 2h5.500v1.500h6c-.8 1.500-.8 3-1 4.500H9V7H3z" fill="#fff" stroke="#6b6b6b"/>
    </svg>
);

const DesktopIcon = () => (
    <svg width="16" height="14" viewBox="0 0 16 14">
        <path d="M1 1.500h14v9H1z" fill="#2a6fd0" stroke="#184686"/>
        <path d="M1.500 2h13L6 8 1.500 9z" fill="#5a9ae8"/>
        <path d="M4.500 12.500h7" stroke="#4a5b75" strokeWidth="1.500"/>
    </svg>
);

const AnyRunMark = () => (
    <svg width="230" height="80" viewBox="0 0 230 80">
        <defs>
            <filter id="soft" x="-10%" y="-10%" width="120%" height="120%">
                <feDropShadow dx="0" dy="0" stdDeviation="1.800" floodColor="#8a8a8a" floodOpacity=".55"/>
            </filter>
            <linearGradient id="fade" x1="0" y1="0" x2="0" y2="1">
                <stop offset="0" stopColor="#ffffff"/>
                <stop offset=".5" stopColor="#fafafa"/>
                <stop offset=".55" stopColor="#ececec"/>
                <stop offset="1" stopColor="#e6e6e6"/>
            </linearGradient>
        </defs>
        <g filter="url(#soft)" fill="url(#fade)" fontFamily="Liberation Sans" fontWeight="bold" fontSize="52">
            <text transform="translate(9 58) scale(.57 1)">ANY</text>
            <text transform="translate(139 58) scale(.57 1)">RUN</text>
            <path d="M91 66V12l38 27-38 27z" fill="none" stroke="#f0f0f0" strokeWidth="6"/>
            <path d="M91 12v26M91 12l38 27" fill="none" stroke="#ffffff" strokeWidth="5"/>
            <path d="M86 18h-4v43h4" fill="none" stroke="#f6f6f6" strokeWidth="4"/>
        </g>
    </svg>
);

/* ---------- sections ---------- */

const Browser = () => (
    <>
        <TitleBar>
            <IeIcon/>
            <TitleText>Wiseton Industries.pdf - pCloud - Internet Explorer</TitleText>
            <CaptionButton><svg width="8" height="8"><path d="M0 6h6v2H0z"/></svg></CaptionButton>
            <CaptionButton>
                <svg width="9" height="9" fill="none" stroke="#000"><path d="M2.500 3V.500h6v5H6M2 1h7M.500 3.500h5v5h-5zM0 4h6"/></svg>
            </CaptionButton>
            <CaptionButton $gap={2}><svg width="8" height="8" stroke="#000" strokeWidth="1.600"><path d="M.5.5l7 7M7.500.5l-7 7"/></svg></CaptionButton>
        </TitleBar>
        <AddressRow>
            <NavButtons><NavArrows/></NavButtons>
            <AddressBox $w={740}>
                <CloudIcon/>
                <AddressText $pad={4} $ls={-0.2}>
                    <Text $color="#000">https</Text>://u.<Text $color="#000">pcloud.link</Text>/publink/show?code=XZCH6wXZaWlBlCdhWRb0RgE5OdCCk4qRRs6V
                </AddressText>
                <DropButton><Caret color="#000" size={7}/></DropButton>
            </AddressBox>
            <SquareButton $w={26} $gap={1} $line="#8bb8ee" $bg="#c9dffb"><LockIcon/></SquareButton>
            <SquareButton $w={22} $gap={4} $line="#bdbbb8" $bg="#eeece9"><RefreshIcon/></SquareButton>
            <AddressBox $w={318} $gap={7}>
                <AddressText $pad={2} $ls={0.2}>Search...</AddressText>
                <SearchIcon/>
                <DropButton $before={2} $gap={4}><Caret color="#000" size={7}/></DropButton>
            </AddressBox>
            <CommandIcons><HomeIcon/><StarIcon/><GearIcon/></CommandIcons>
        </AddressRow>
        <TabRow>
            <BrowserTab>
                <CloudIcon/>
                <TabLabel>Waiting for chanchitosdecolo...</TabLabel>
                <svg width="9" height="9" stroke="#7c7874" strokeWidth="1.800"><path d="M1 1l7 7M8 1L1 8"/></svg>
            </BrowserTab>
            <NewTab/>
        </TabRow>
        <Viewport>
            <PageArea>
                <Banner><BannerArt/></Banner>
            </PageArea>
            <VScroll>
                <Chevron dir="up"/>
                <VThumb/>
                <Chevron dir="down"/>
            </VScroll>
        </Viewport>
        <HScroll>
            <Chevron dir="left"/>
            <HThumb/>
            <Chevron dir="right"/>
        </HScroll>
    </>
);

const ClipboardGroup = () => (
    <Group $w={151}>
        <GroupBody $pad={4}>
            <BigButton $w={41} $ls={-0.1}>
                <BigIcon><PasteIcon/></BigIcon>
                <BigLabel>Paste</BigLabel>
                <LineTwo><Caret/></LineTwo>
            </BigButton>
            <SmallStack $pad={4}>
                <SmallButton $off><CutIcon/>Cut</SmallButton>
                <SmallButton $off><CopyIcon/>Copy</SmallButton>
                <SmallButton $off $ls={-0.12}><PainterIcon/>Format Painter</SmallButton>
            </SmallStack>
        </GroupBody>
        <GroupFooter>
            <GroupName>Clipboard</GroupName>
            <Launcher><LauncherIcon/></Launcher>
        </GroupFooter>
    </Group>
);

const BasicTextGroup = () => (
    <Group $w={310}>
        <GroupBody $column>
            <ToolRow $top={7}>
                <Combo $w={104}><Caret/></Combo>
                <Combo $w={43} $joined><Caret/></Combo>
                <Cell $w={24}><ResizeLetter grow/></Cell>
                <Cell $w={20}><ResizeLetter/></Cell>
                <Cell $w={10}><Rule/></Cell>
                <Cell $w={24}><ListIcon/></Cell>
                <Cell $w={6}><Caret color="#b9bbbd"/></Cell>
                <Cell $w={28}><ListIcon numbered/></Cell>
                <Cell $w={5}><Caret color="#b9bbbd"/></Cell>
                <Cell $w={16}><Rule/></Cell>
                <Cell $w={18}><FormatClearIcon/></Cell>
            </ToolRow>
            <ToolRow $top={6}>
                <Cell $w={22}><Letter>B</Letter></Cell>
                <Cell $w={24}><Letter $italic>I</Letter></Cell>
                <Cell $w={22}><Letter $under>U</Letter></Cell>
                <Cell $w={10}><Rule/></Cell>
                <Cell $w={24}><HighlightIcon/></Cell>
                <Cell $w={6}><Caret color="#b9bbbd"/></Cell>
                <Cell $w={28}><Letter $size={16}>A</Letter></Cell>
                <Cell $w={6}><Caret color="#b9bbbd"/></Cell>
                <Cell $w={14}><Rule/></Cell>
                <Cell $w={20}><AlignIcon mode="left"/></Cell>
                <Cell $w={26}><AlignIcon mode="center"/></Cell>
                <Cell $w={22}><AlignIcon mode="right"/></Cell>
                <Cell $w={24}><JustifyIcon/></Cell>
                <Cell $w={8}><Rule/></Cell>
                <Cell $w={24}><IndentIcon/></Cell>
                <Cell $w={20}><IndentIcon more/></Cell>
            </ToolRow>
        </GroupBody>
        <GroupFooter>
            <GroupName>Basic Text</GroupName>
            <Launcher><LauncherIcon/></Launcher>
        </GroupFooter>
    </Group>
);

const NamesGroup = () => (
    <Group $w={97}>
        <GroupBody $pad={5}>
            <BigButton $w={44} $ls={-0.1}>
                <BigIcon><AddressBookIcon/></BigIcon>
                <BigLabel>Address<br/>Book</BigLabel>
            </BigButton>
            <BigButton $w={44} $ls={-0.1}>
                <BigIcon><CheckNamesIcon/></BigIcon>
                <BigLabel>Check<br/>Names</BigLabel>
            </BigButton>
        </GroupBody>
        <GroupFooter><GroupName>Names</GroupName></GroupFooter>
    </Group>
);

const IncludeGroup = () => (
    <Group $w={148}>
        <GroupBody $pad={4}>
            <BigButton $w={42} $off>
                <BigIcon><ClipIcon/></BigIcon>
                <BigLabel>Attach<br/>File</BigLabel>
            </BigButton>
            <BigButton $w={42}>
                <BigIcon><EnvelopeClipIcon/></BigIcon>
                <BigLabel>Attach<LineTwo>Item<Caret/></LineTwo></BigLabel>
            </BigButton>
            <BigButton $w={56} $ls={-0.12}>
                <BigIcon><SignatureIcon/></BigIcon>
                <BigLabel>Signature</BigLabel>
                <LineTwo><Caret/></LineTwo>
            </BigButton>
        </GroupBody>
        <GroupFooter><GroupName>Include</GroupName></GroupFooter>
    </Group>
);

const TagsGroup = () => (
    <Group $w={121}>
        <GroupBody $pad={10}>
            <SmallStack>
                <SmallButton $gap={5}><FlagIcon/><Text>Follow Up</Text><Caret/></SmallButton>
                <SmallButton $gap={5} $ls={-0.12}><AlertIcon/>High Importance</SmallButton>
                <SmallButton $gap={5} $ls={-0.12}><DownIcon/>Low Importance</SmallButton>
            </SmallStack>
        </GroupBody>
        <GroupFooter>
            <GroupName>Tags</GroupName>
            <Launcher><LauncherIcon/></Launcher>
        </GroupFooter>
    </Group>
);

const ZoomGroup = () => (
    <Group $w={51}>
        <GroupBody>
            <BigButton $w={50} $off>
                <BigIcon><ZoomIcon/></BigIcon>
                <BigLabel>Zoom</BigLabel>
            </BigButton>
        </GroupBody>
        <GroupFooter><GroupName>Zoom</GroupName></GroupFooter>
    </Group>
);

const OutlookWindow = () => (
    <Window>
        <WindowTitle>
            <QuickBar>
                <QuickSlot $w={17}><MailIcon/></QuickSlot>
                <QuickSlot $w={5}><Rule $dark/></QuickSlot>
                <QuickSlot $w={25}><SaveIcon/></QuickSlot>
                <QuickSlot $w={18}><UndoIcon/></QuickSlot>
                <QuickSlot $w={27}><RedoIcon/></QuickSlot>
                <QuickSlot $w={17}><BlockArrow/></QuickSlot>
                <QuickSlot $w={27}><BlockArrow down/></QuickSlot>
                <QuickSlot $w={14}><CustomizeIcon/></QuickSlot>
            </QuickBar>
            <Caption>Untitled  -  Message (HTML)</Caption>
            <WindowButtons><MinIcon/><MaxIcon/><CloseIcon/></WindowButtons>
        </WindowTitle>
        <Tabs>
            <Tab $w={56} $file>File</Tab>
            <Tab $w={72} $active>Message</Tab>
            <Tab $w={59}>Insert</Tab>
            <Tab $w={69}>Options</Tab>
            <Tab $w={87}>Format Text</Tab>
            <Tab $w={64}>Review</Tab>
            <Tab $w={80}>Developer</Tab>
            <TabTools><CollapseIcon/><HelpBadge>?</HelpBadge></TabTools>
        </Tabs>
        <Frame>
            <Ribbon>
                <ClipboardGroup/>
                <BasicTextGroup/>
                <NamesGroup/>
                <IncludeGroup/>
                <TagsGroup/>
                <ZoomGroup/>
            </Ribbon>
            <Fields>
                <Field>
                    <FieldButton>To...</FieldButton>
                    <Input>webmaster@chanchitosdecolores.com.ar</Input>
                </Field>
                <Field>
                    <FieldButton>Cc...</FieldButton>
                    <Input/>
                </Field>
                <Field>
                    <FieldLabel>Subject:</FieldLabel>
                    <Input/>
                </Field>
            </Fields>
            <Editor>
                <EditorScroll>
                    <ScrollTools>
                        <svg width="8" height="2"><path d="M0 0h8v2H0z" fill="#60656d"/></svg>
                        <SelectObjectIcon/>
                    </ScrollTools>
                    <ScrollArrow><svg width="9" height="5"><path d="M0 5L4.500 0 9 5z" fill="#8e929b"/></svg></ScrollArrow>
                    <ScrollArrow $end><svg width="9" height="5"><path d="M0 0l4.500 5L9 0z" fill="#8e929b"/></svg></ScrollArrow>
                </EditorScroll>
            </Editor>
            <Splitter/>
            <PeoplePane>
                <svg width="9" height="7"><path d="M1 5.500L4.500 2 8 5.500" fill="none" stroke="#222" strokeWidth="1.800"/></svg>
            </PeoplePane>
        </Frame>
    </Window>
);

const App = () => (
    <>
        <GlobalStyle/>
        <Screen>
            <Browser/>
            <Taskbar>
                <StartButton><WindowsFlag/><Text $ls={-0.3}>Start</Text></StartButton>
                <TaskButton $w={9}/>
                <TaskButton $w={32} $raised><IeIcon/></TaskButton>
                <TaskButton $w={36}><FolderIcon/></TaskButton>
                <TaskButton $w={32}><PlayerIcon/></TaskButton>
                <TaskButton $w={34}><ChromeIcon/></TaskButton>
                <TaskButton $w={34}><OperaIcon/></TaskButton>
                <TaskButton $w={32} $pressed><OutlookIcon/></TaskButton>
                <Tray>
                    <TrayUpIcon/>
                    <QuickSlot $w={36}><SpeakerIcon/></QuickSlot>
                    <QuickSlot $w={12}><NetworkIcon/></QuickSlot>
                    <QuickSlot $w={36}><TrayFlagIcon/></QuickSlot>
                    <Clock>7:16 PM</Clock>
                    <DesktopIcon/>
                </Tray>
            </Taskbar>
            <OutlookWindow/>
            <Watermark><AnyRunMark/></Watermark>
        </Screen>
    </>
);

export default App;
